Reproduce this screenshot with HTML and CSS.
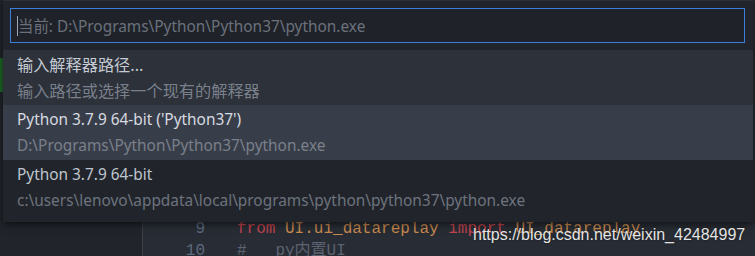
FILE: index.html
```html
<!DOCTYPE html>
<html>
<head>
    <title>Select Interpreter</title>
    <link rel="stylesheet" href="styles.css">
</head>
<body>
    <div class="workbench">
        <div class="sidebar">
            <div class="git-mark"></div>
        </div>
        <div class="editor">
            <div class="line"><span class="ln">9</span><span class="kw">from</span> <span class="mod">UI.ui_datareplay</span> <span class="kw">import</span> <span class="mod">UI_datareplay</span></div>
            <div class="line"><span class="ln">10</span><span class="cm">#   py内置UI</span></div>
        </div>
    </div>

    <div class="quick-pick">
        <div class="input-box">
            <span class="caret"></span>
            <span class="placeholder">当前: D:\Programs\Python\Python37\python.exe</span>
        </div>
        <div class="list">
            <div class="item cjk">
                <div class="label">输入解释器路径...</div>
                <div class="detail">输入路径或选择一个现有的解释器</div>
            </div>
            <div class="item active">
                <div class="label">Python 3.7.9 64-bit ('Python37')</div>
                <div class="detail">D:\Programs\Python\Python37\python.exe</div>
            </div>
            <div class="item last">
                <div class="label">Python 3.7.9 64-bit</div>
                <div class="detail">c:\users\lenovo\appdata\local\programs\python\python37\python.exe</div>
            </div>
        </div>
    </div>

    <div class="watermark">https://blog.csdn.net/weixin_42484997</div>
</body>
</html>
```

FILE: styles.css
```css
body {
    margin: 0;
    width: 755px;
    height: 256px;
    overflow: hidden;
    background: #282c34;
    font-family: "Noto Sans", "Noto Sans CJK SC", sans-serif;
    position: relative;
}
.workbench {
    display: flex;
    height: 256px;
}
.sidebar {
    width: 142px;
    background: #21252b;
    border-right: 1px solid #3b4048;
}
.git-mark {
    margin-top: 58px;
    width: 3px;
    height: 34px;
    background: #1e6a2a;
}
.editor {
    flex: 1;
    padding-top: 218px;
    font-family: "Liberation Mono", monospace;
    font-size: 16px;
}
.line {
    height: 22px;
    line-height: 22px;
    white-space: pre;
    color: #abb2bf;
}
.ln {
    display: inline-block;
    width: 62px;
    text-align: right;
    margin-right: 32px;
    color: #5c6a7f;
}
.kw { color: #c2444f; }
.mod { color: #c98a4e; }
.cm { color: #5c6370; font-family: "Liberation Mono", "Noto Sans CJK SC", monospace; }

.quick-pick {
    position: absolute;
    left: 3px;
    top: 0;
    width: 750px;
    height: 222px;
    background: #21252b;
    border-top: 1px solid #2c3038;
    box-sizing: border-box;
    box-shadow: 0 2px 8px rgba(0, 0, 0, 0.65);
    font-size: 15.4px;
}
.input-box {
    margin: 7px 8px 0 7px;
    height: 35px;
    border: 1px solid #3a7fdc;
    box-sizing: border-box;
    background: #1f2329;
    display: flex;
    align-items: center;
    padding-left: 6px;
}
.caret {
    width: 1px;
    height: 20px;
    background: #9da5b4;
}
.placeholder {
    color: #6b717c;
}
.list {
    margin-top: 7px;
    background: #2c313a;
}
.item {
    height: 55px;
    padding: 2px 0 0 14px;
    box-sizing: border-box;
}
.item.cjk { font-size: 16.2px; }
.item.active { background: #383e49; }
.item.last {
    height: 62px;
    background: #21252b;
}
.label {
    line-height: 26px;
    color: #c5cad3;
}
.detail {
    line-height: 26px;
    color: #7a808b;
}
.item.active .label { color: #d7dae0; }
.item.last .label { color: #bfc5ce; }
.item.last .detail { color: #6d737e; }

.watermark {
    position: absolute;
    left: 473px;
    top: 226px;
    font-family: "Liberation Sans", sans-serif;
    font-size: 16px;
    color: #e4e4e4;
    text-shadow: 0 0 2px rgba(0, 0, 0, 0.6);
}
```
